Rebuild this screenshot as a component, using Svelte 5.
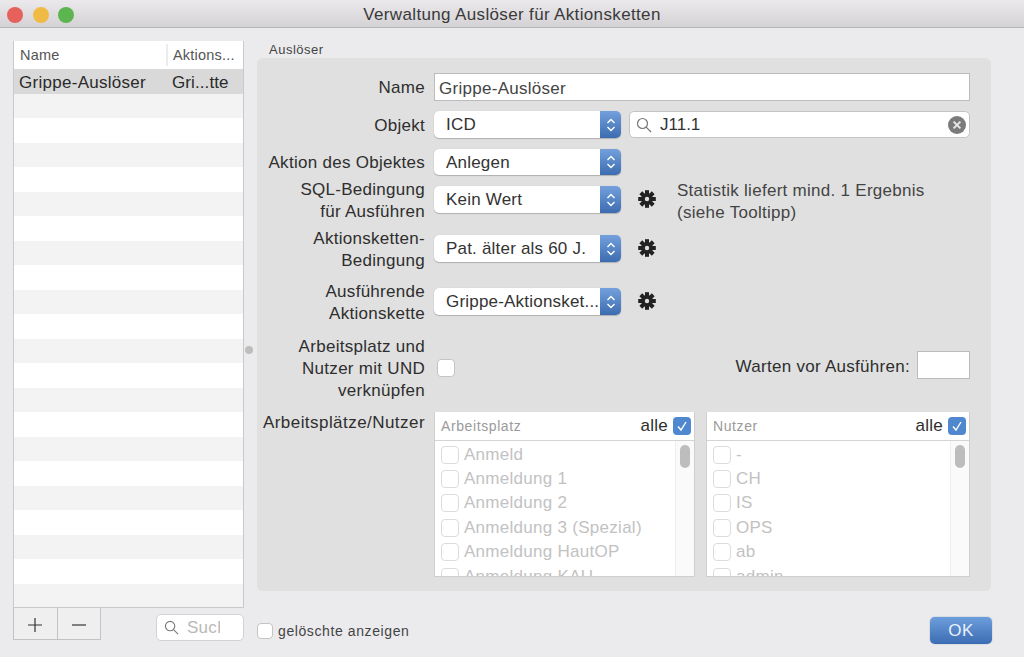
<script>
  const rows = Array.from({ length: 22 }, (_, i) => i);
  const gearTeeth = [0, 45, 90, 135];
  const places = ['Anmeld', 'Anmeldung 1', 'Anmeldung 2', 'Anmeldung 3 (Spezial)', 'Anmeldung HautOP', 'Anmeldung KAU'];
  const users = ['-', 'CH', 'IS', 'OPS', 'ab', 'admin'];
  const lists = [
    { title: 'Arbeitsplatz', items: places, width: 261 },
    { title: 'Nutzer', items: users, width: 264 }
  ];
</script>

{#snippet chevrons()}
  <span class="arrows">
    <svg width="10" height="16" viewBox="0 0 10 16" fill="none" stroke="#fff" stroke-width="1.4">
      <path d="M1.5 6 5 2.5 8.5 6" />
      <path d="M1.5 10 5 13.5 8.5 10" />
    </svg>
  </span>
{/snippet}

{#snippet gear()}
  <svg class="gear" width="18" height="18" viewBox="0 0 18 18">
    {#each gearTeeth as a}
      <rect x="7" y="0.2" width="4" height="17.6" fill="#222" transform="rotate({a} 9 9)" />
    {/each}
    <circle cx="9" cy="9" r="5.9" fill="#222" />
    <circle cx="9" cy="9" r="2.2" fill="#e0e0e0" />
  </svg>
{/snippet}

{#snippet lens(size)}
  <svg width={size} height={size} viewBox="0 0 16 16" fill="none" stroke="#777" stroke-width="1.2">
    <circle cx="6.5" cy="6.5" r="5" />
    <path d="M10.2 10.2 15 15" />
  </svg>
{/snippet}

<div class="window">
  <header class="titlebar">
    <div class="lights">
      <span class="light red"></span>
      <span class="light yellow"></span>
      <span class="light green"></span>
    </div>
    <div class="title">Verwaltung Auslöser für Aktionsketten</div>
  </header>

  <div class="content">
    <aside class="side">
      <div class="table">
        <div class="thead">
          <div class="th name">Name</div>
          <div class="th">Aktions...</div>
        </div>
        {#each rows as r}
          <div class="row" class:selected={r === 0} class:odd={r % 2 === 1}>
            {#if r === 0}
              <span class="cell-name">Grippe-Auslöser</span>
              <span class="cell-chain">Gri...tte</span>
            {/if}
          </div>
        {/each}
      </div>
      <div class="side-foot">
        <div class="plusminus">
          <button class="pm">
            <svg width="16" height="16" viewBox="0 0 16 16" stroke="#333" stroke-width="1.2"><path d="M8 1v14M1 8h14" /></svg>
          </button>
          <button class="pm">
            <svg width="16" height="16" viewBox="0 0 16 16" stroke="#333" stroke-width="1.2"><path d="M1 8h14" /></svg>
          </button>
        </div>
        <div class="mini-search">
          {@render lens(15)}
          <span class="mini-text">Such</span>
        </div>
      </div>
    </aside>

    <div class="splitter"><span class="dot"></span></div>

    <main class="main">
      <div class="group-label">Auslöser</div>
      <section class="box">
        <div class="f-row r-name">
          <div class="label">Name</div>
          <div class="textfield wide">Grippe-Auslöser</div>
        </div>

        <div class="f-row r-obj">
          <div class="label">Objekt</div>
          <div class="select"><span class="sel-text">ICD</span>{@render chevrons()}</div>
          <div class="searchfield">
            {@render lens(16)}
            <span class="search-text">J11.1</span>
            <svg class="clear" width="18" height="18" viewBox="0 0 18 18">
              <circle cx="9" cy="9" r="9" fill="#7b7b7b" />
              <path d="M5.6 5.6l6.8 6.8M12.4 5.6l-6.8 6.8" stroke="#e8e8e8" stroke-width="2" />
            </svg>
          </div>
        </div>

        <div class="f-row r-action">
          <div class="label">Aktion des Objektes</div>
          <div class="select short"><span class="sel-text">Anlegen</span>{@render chevrons()}</div>
        </div>

        <div class="f-row r-sql">
          <div class="label">SQL-Bedingung<br />für Ausführen</div>
          <div class="select"><span class="sel-text">Kein Wert</span>{@render chevrons()}</div>
          {@render gear()}
          <div class="hint">Statistik liefert mind. 1 Ergebnis<br />(siehe Tooltipp)</div>
        </div>

        <div class="f-row r-cond">
          <div class="label">Aktionsketten-<br />Bedingung</div>
          <div class="select"><span class="sel-text">Pat. älter als 60 J.</span>{@render chevrons()}</div>
          {@render gear()}
        </div>

        <div class="f-row r-chain">
          <div class="label">Ausführende<br />Aktionskette</div>
          <div class="select"><span class="sel-text">Grippe-Aktionsket...</span>{@render chevrons()}</div>
          {@render gear()}
        </div>

        <div class="f-row r-and">
          <div class="label">Arbeitsplatz und<br />Nutzer mit UND<br />verknüpfen</div>
          <span class="check and-check"></span>
          <div class="wait">
            <span class="wait-text">Warten vor Ausführen:</span>
            <div class="textfield wait-input"></div>
          </div>
        </div>

        <div class="f-row r-lists">
          <div class="label">Arbeitsplätze/Nutzer</div>
          <div class="lists">
            {#each lists as list}
              <div class="list" style="width: {list.width}px">
                <div class="list-head">
                  <span class="list-title">{list.title}</span>
                  <span class="alle">alle</span>
                  <span class="blue-check">
                    <svg width="12" height="12" viewBox="0 0 12 12" fill="none" stroke="#fff" stroke-width="1.4"><path d="M2 6.5 5 10 10 2" /></svg>
                  </span>
                </div>
                <div class="list-body">
                  <div class="items">
                    {#each list.items as item}
                      <div class="item"><span class="check faded"></span><span>{item}</span></div>
                    {/each}
                  </div>
                  <div class="track"><span class="thumb"></span></div>
                </div>
              </div>
            {/each}
          </div>
        </div>
      </section>

      <div class="bottom">
        <label class="deleted"><span class="check small"></span>gelöschte anzeigen</label>
        <button class="ok">OK</button>
      </div>
    </main>
  </div>
</div>

<style>
  :global(body) {
    margin: 0;
    background: #ebebed;
  }

  .window {
    width: 1024px;
    height: 657px;
    overflow: hidden;
    background: #ebebed;
    color: #2e2e2e;
    font-family: "Liberation Sans", Arial, sans-serif;
    font-size: 17px;
    letter-spacing: 0.28px;
  }

  .titlebar {
    position: relative;
    height: 27px;
    display: flex;
    align-items: center;
    justify-content: center;
    background: linear-gradient(#ebe9eb, #d4d2d4);
    border-bottom: 1px solid #b4b4b4;
  }

  .lights {
    position: absolute;
    left: 7px;
    top: 7px;
    display: flex;
    gap: 9.5px;
  }

  .light {
    width: 16px;
    height: 16px;
    border-radius: 50%;
  }

  .red { background: #e6605c; }
  .yellow { background: #f0bb45; }
  .green { background: #5cb54f; }

  .title {
    color: #3a3a3a;
    letter-spacing: 0.35px;
    transform: translateY(1px);
  }

  .content {
    display: flex;
    padding: 13px 0 0 13px;
  }

  .side {
    width: 231px;
    flex: none;
  }

  .table {
    height: 567px;
    box-sizing: border-box;
    border: 1px solid #c9c9c9;
    border-top: none;
    background: #fff;
    overflow: hidden;
  }

  .thead {
    height: 28px;
    display: flex;
    align-items: center;
    font-size: 14.5px;
    color: #555;
  }

  .th {
    padding-left: 5px;
    letter-spacing: 0.2px;
  }

  .th.name {
    width: 154px;
    box-sizing: border-box;
    padding-left: 6px;
    border-right: 2px solid #ececec;
    line-height: 22px;
  }

  .row {
    height: 24.5px;
    display: flex;
    align-items: center;
    background: #fff;
  }

  .row.odd {
    background: #f4f3f4;
  }

  .row.selected {
    background: #d9d9d9;
    color: #2a2a2a;
  }

  .row.selected span {
    transform: translateY(2px);
  }

  .cell-name {
    width: 158px;
    padding-left: 5px;
    box-sizing: border-box;
  }

  .cell-chain {
    letter-spacing: 0.1px;
  }

  .side-foot {
    display: flex;
    justify-content: space-between;
    align-items: flex-start;
  }

  .plusminus {
    display: flex;
    width: 88px;
    height: 32px;
    box-sizing: border-box;
    border: 1px solid #c2c2c2;
    border-top: none;
    background: #efeff0;
  }

  .pm {
    flex: 1;
    padding: 3px 0 0;
    border: none;
    background: none;
    display: flex;
    align-items: center;
    justify-content: center;
  }

  .pm + .pm {
    border-left: 1px solid #c2c2c2;
  }

  .mini-search {
    width: 88px;
    height: 27px;
    margin-top: 6px;
    box-sizing: border-box;
    padding-left: 7px;
    display: flex;
    align-items: center;
    gap: 8px;
    border: 1px solid #d2d2d2;
    border-radius: 5px;
    background: #fff;
    overflow: hidden;
  }

  .mini-text {
    width: 33px;
    overflow: hidden;
    color: #b9b9b9;
  }

  .splitter {
    width: 13px;
    flex: none;
    position: relative;
  }

  .dot {
    position: absolute;
    left: 1px;
    top: 305px;
    width: 8px;
    height: 8px;
    border-radius: 50%;
    background: #bdbdbd;
  }

  .main {
    width: 734px;
    flex: none;
  }

  .group-label {
    height: 17px;
    padding-left: 12px;
    font-size: 13px;
    line-height: 17px;
    letter-spacing: 0.5px;
    color: #444;
  }

  .box {
    height: 533px;
    box-sizing: border-box;
    padding: 15px 21px 0 0;
    border-radius: 6px;
    background: #e0e0e0;
  }

  .f-row {
    display: flex;
    align-items: center;
  }

  .label {
    width: 168px;
    flex: none;
    margin-right: 9px;
    text-align: right;
    line-height: 22px;
    white-space: nowrap;
    transform: translateY(1px);
  }

  .r-name { height: 28px; }
  .r-obj { height: 27px; margin-top: 10px; }
  .r-action { height: 26px; margin-top: 11px; }
  .r-sql { height: 27px; margin-top: 11px; }
  .r-cond { height: 27px; margin-top: 22px; }
  .r-chain { height: 27px; margin-top: 26px; }
  .r-and { height: 62px; margin-top: 22px; }
  .r-lists { align-items: flex-start; margin-top: 13px; }

  .r-lists .label {
    letter-spacing: 0.45px;
    transform: none;
  }

  .textfield {
    box-sizing: border-box;
    border: 1px solid #bcbcbc;
    background: #fff;
  }

  .wide {
    width: 536px;
    height: 28px;
    padding-left: 4px;
    line-height: 29px;
    color: #444;
  }

  .select {
    width: 187px;
    height: 100%;
    flex: none;
    box-sizing: border-box;
    display: flex;
    border-radius: 5px;
    background: #fff;
    box-shadow: 0 1px 1px #b0b0b0, 0 0 1px #bbb;
    overflow: hidden;
  }

  .sel-text {
    flex: 1;
    padding-left: 12px;
    line-height: 27px;
    white-space: nowrap;
    overflow: hidden;
    color: #333;
    letter-spacing: 0.2px;
  }

  .arrows {
    width: 21px;
    flex: none;
    display: flex;
    align-items: center;
    justify-content: center;
    background: linear-gradient(#74a0dc, #3c6cb0);
  }

  .searchfield {
    width: 341px;
    height: 100%;
    margin-left: 8px;
    box-sizing: border-box;
    padding: 0 3px 0 6px;
    display: flex;
    align-items: center;
    gap: 8px;
    border: 1px solid #c4c4c4;
    border-radius: 5px;
    background: #fff;
  }

  .search-text {
    flex: 1;
    color: #333;
    letter-spacing: 0;
  }

  .gear {
    flex: none;
    margin-left: 17px;
    margin-top: -1px;
  }

  .hint {
    margin-left: 21px;
    line-height: 22px;
    color: #444;
    white-space: nowrap;
    transform: translateY(2px);
  }

  .check {
    display: block;
    width: 18px;
    height: 18px;
    flex: none;
    box-sizing: border-box;
    border: 1px solid #c4c4c4;
    border-radius: 4px;
    background: #fff;
  }

  .and-check {
    margin-left: 3px;
  }

  .wait {
    margin-left: auto;
    display: flex;
    align-items: center;
    gap: 7px;
    margin-bottom: 6px;
  }

  .wait-text {
    transform: translateY(2px);
  }

  .wait-input {
    width: 53px;
    height: 28px;
  }

  .lists {
    display: flex;
    gap: 11px;
  }

  .list {
    height: 165px;
    box-sizing: border-box;
    border: 1px solid #cfcfcf;
    border-top: none;
    background: #fff;
    overflow: hidden;
  }

  .list-head {
    height: 29px;
    box-sizing: border-box;
    padding: 0 3px 0 6px;
    display: flex;
    align-items: center;
    border-bottom: 1px solid #d4d4d4;
  }

  .list-title {
    flex: 1;
    font-size: 14px;
    letter-spacing: 0.6px;
    color: #9a9a9a;
  }

  .alle {
    margin-right: 5px;
  }

  .blue-check {
    width: 18px;
    height: 18px;
    display: flex;
    align-items: center;
    justify-content: center;
    border-radius: 4px;
    background: #4f88cf;
  }

  .list-body {
    display: flex;
    height: 135px;
  }

  .items {
    flex: 1;
    padding: 1.5px 0 0 6px;
  }

  .item {
    height: 24.4px;
    display: flex;
    align-items: center;
    gap: 5px;
    color: #c2c2c2;
    white-space: nowrap;
  }

  .check.faded {
    border-color: #dcdcdc;
  }

  .track {
    width: 19px;
    flex: none;
    box-sizing: border-box;
    border-left: 1px solid #eee;
    background: #fafafa;
    padding: 4px 0 0 4px;
  }

  .thumb {
    display: block;
    width: 10px;
    height: 23px;
    border-radius: 5px;
    background: #bdbdbd;
  }

  .bottom {
    display: flex;
    align-items: center;
    justify-content: space-between;
    margin-top: 26px;
    height: 27px;
    margin-right: -1px;
  }

  .deleted {
    display: flex;
    align-items: center;
    gap: 5px;
    font-size: 14px;
    color: #444;
    letter-spacing: 0.6px;
  }

  .check.small {
    width: 16px;
    height: 16px;
  }

  .ok {
    width: 62px;
    height: 27px;
    padding: 0;
    border: none;
    border-radius: 5px;
    font: inherit;
    letter-spacing: 0.5px;
    color: #e8f0fb;
    background: linear-gradient(#6d9edc, #3c6cb2);
    box-shadow: 0 0 1px #2f5c9c;
  }
</style>
